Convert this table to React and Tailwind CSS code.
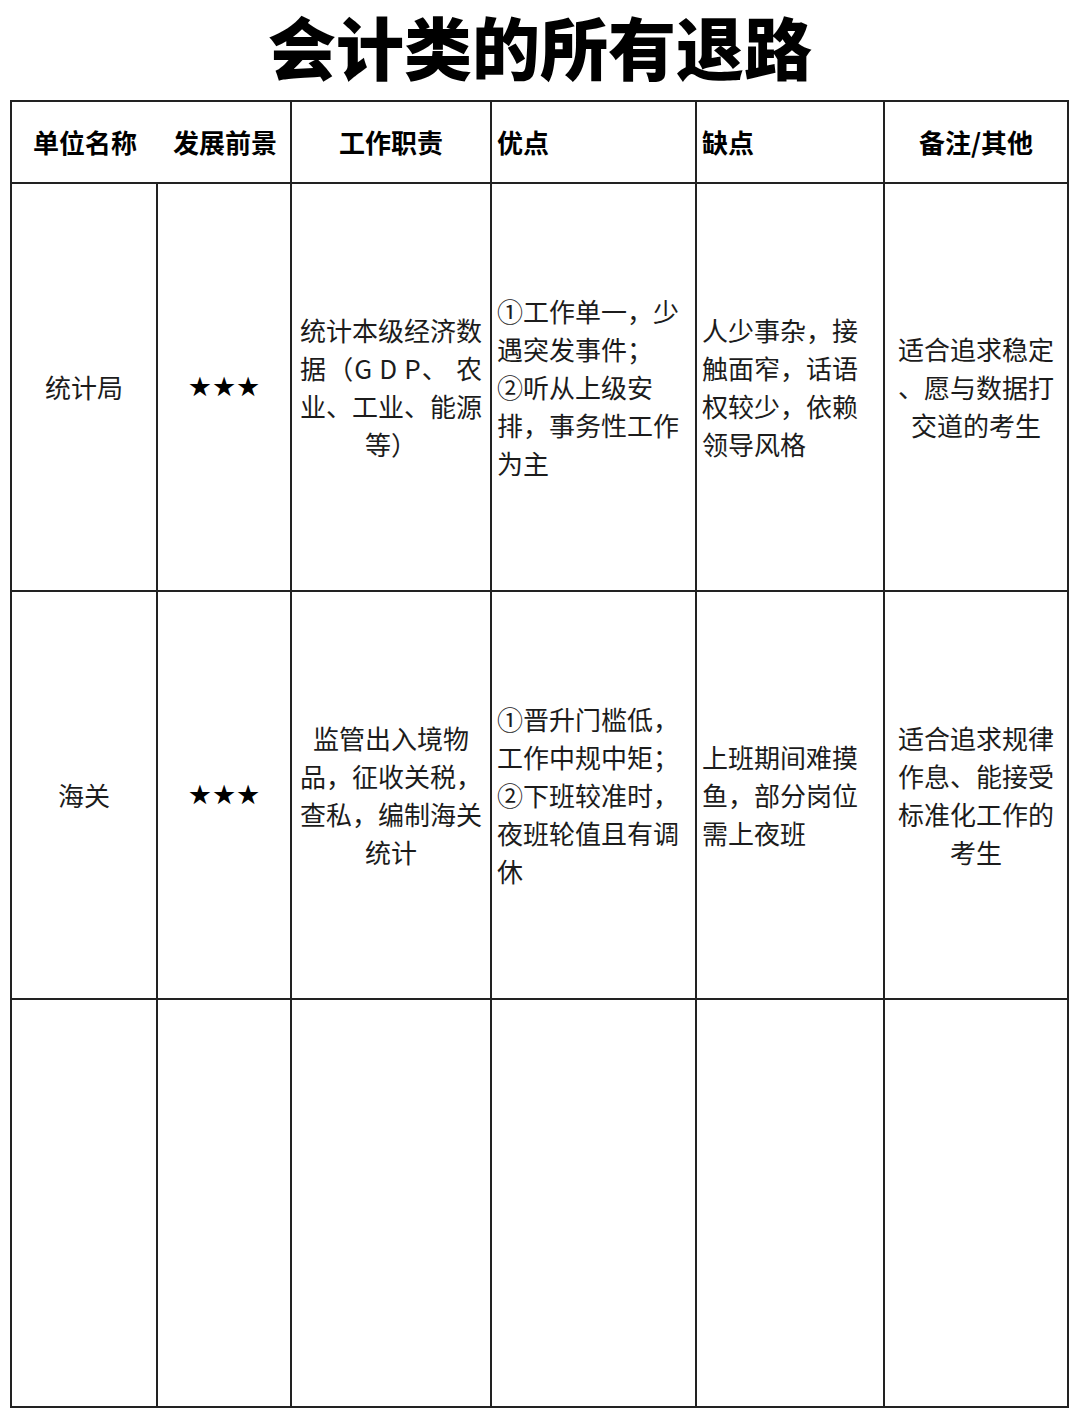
const FONT = { fontFamily: '"Noto Sans CJK SC", "Noto Sans", sans-serif' };

const rows = [
  {
    name: '统计局',
    duty: { type: 'justify', lines: ['统计本级经济数', '据（GDP、农', '业、工业、能源', '等）'] },
    pros: ['①工作单一，少', '遇突发事件；', '②听从上级安', '排，事务性工作', '为主'],
    cons: ['人少事杂，接', '触面窄，话语', '权较少，依赖', '领导风格'],
    note: ['适合追求稳定', '、愿与数据打', '交道的考生'],
  },
  {
    name: '海关',
    duty: { type: 'center', lines: ['监管出入境物', '品，征收关税，', '查私，编制海关', '统计'] },
    pros: ['①晋升门槛低，', '工作中规中矩；', '②下班较准时，', '夜班轮值且有调', '休'],
    cons: ['上班期间难摸', '鱼，部分岗位', '需上夜班'],
    note: ['适合追求规律', '作息、能接受', '标准化工作的', '考生'],
  },
];

const cell = 'border-r-2 border-b-2 border-[#222] flex items-center';

function Lines({ lines, className = '' }) {
  return (
    <div className={className}>
      {lines.map((l, i) => <div key={i}>{l}</div>)}
    </div>
  );
}

export default function App() {
  return (
    <div className="w-[1080px] h-[1416px] bg-white text-[#1c1c1c] pt-[3px]" style={FONT}>
      {/* Title */}
      <h1 className="text-center text-[68px] leading-[85px] font-black text-black">会计类的所有退路</h1>

      {/* Table */}
      <div className="mt-[12px] ml-[10px] w-[1059px] border-l-2 border-t-2 border-[#222] grid grid-cols-[146px_134px_200px_205px_188px_184px] text-[26px] leading-[38px]">
        {/* header */}
        <div className={`${cell} col-span-2 h-[82px] grid grid-cols-[146px_134px] font-bold text-black`}>
          <div className="text-center">单位名称</div>
          <div className="text-center">发展前景</div>
        </div>
        <div className={`${cell} h-[82px] justify-center font-bold text-black`}>工作职责</div>
        <div className={`${cell} h-[82px] px-[5px] font-bold text-black`}>优点</div>
        <div className={`${cell} h-[82px] px-[5px] font-bold text-black`}>缺点</div>
        <div className={`${cell} h-[82px] justify-center font-bold text-black`}>备注/其他</div>

        {rows.map((r, i) => (
          <div key={i} className="contents">
            <div className={`${cell} h-[408px] justify-center`}>{r.name}</div>
            <div className={`${cell} h-[408px] justify-center`}>
              <span className="text-[27px] text-black" style={{ fontFamily: '"DejaVu Sans", sans-serif' }}>★★★</span>
            </div>
            <div className={`${cell} h-[408px] px-[8px]`}>
              {r.duty.type === 'justify' ? (
                <div className="w-full">
                  {r.duty.lines.map((l, j) => (
                    <div
                      key={j}
                      className={j < r.duty.lines.length - 1 ? 'text-justify [text-align-last:justify]' : 'text-center'}
                    >
                      {j === 1 ? <>据（G D P、 农</> : l}
                    </div>
                  ))}
                </div>
              ) : (
                <Lines lines={r.duty.lines} className="w-full text-center" />
              )}
            </div>
            <div className={`${cell} h-[408px] px-[5px]`}>
              <Lines lines={r.pros} className="whitespace-nowrap" />
            </div>
            <div className={`${cell} h-[408px] px-[5px]`}>
              <Lines lines={r.cons} className="whitespace-nowrap" />
            </div>
            <div className={`${cell} h-[408px] justify-center`}>
              <Lines lines={r.note} className="text-center whitespace-nowrap" />
            </div>
          </div>
        ))}

        {/* empty row */}
        {[0, 1, 2, 3, 4, 5].map(k => (
          <div key={k} className={`${cell} h-[408px]`} />
        ))}
      </div>
    </div>
  );
}
